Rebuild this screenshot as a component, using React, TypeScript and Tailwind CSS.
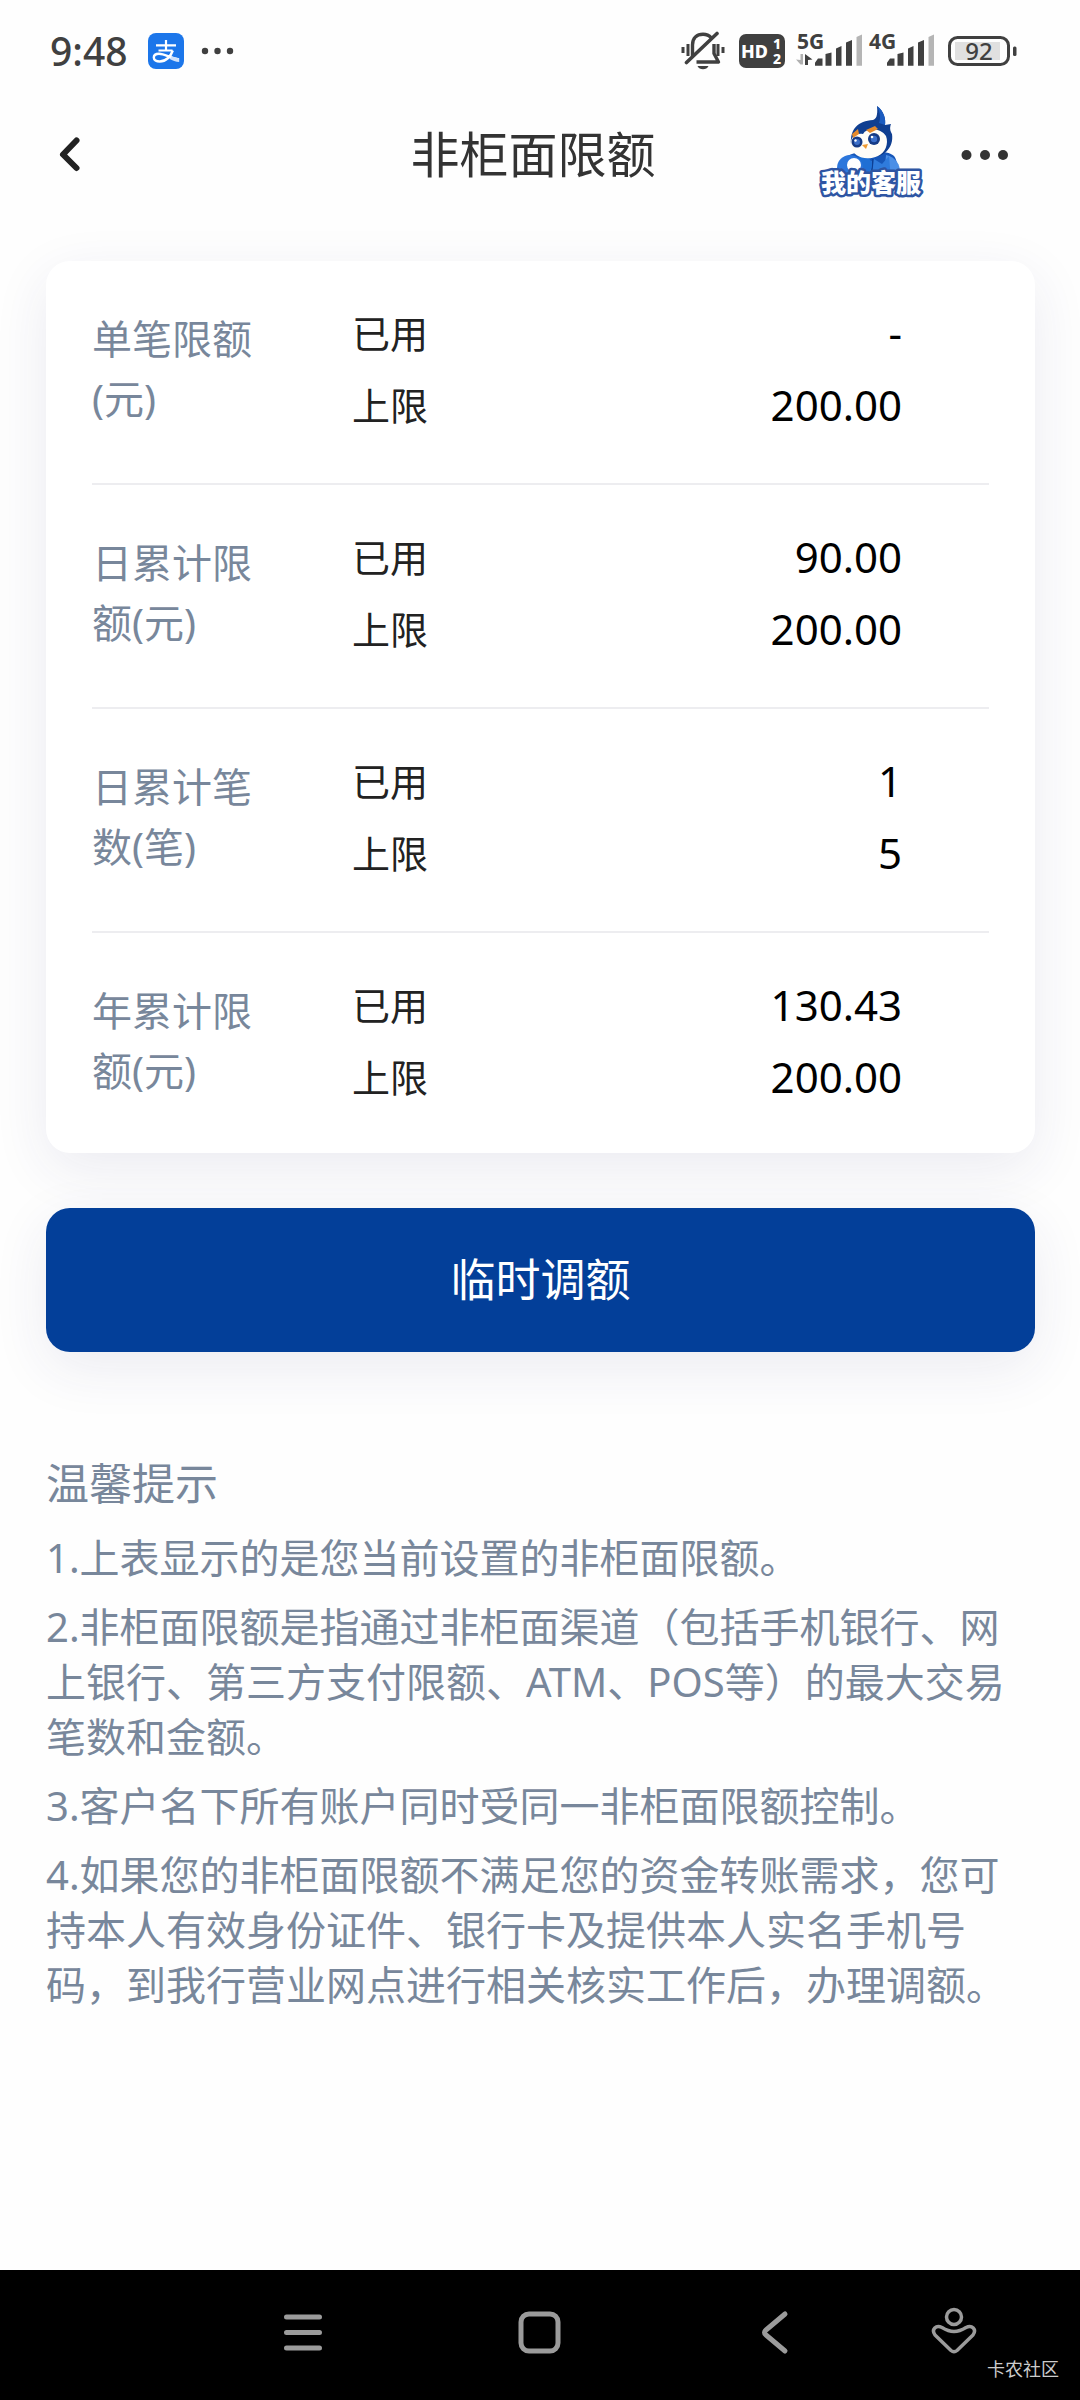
import React from "react";

interface LimitRow {
  label: string;
  used: string;
  max: string;
}

const LIMITS: LimitRow[] = [
  { label: "单笔限额(元)", used: "-", max: "200.00" },
  { label: "日累计限额(元)", used: "90.00", max: "200.00" },
  { label: "日累计笔数(笔)", used: "1", max: "5" },
  { label: "年累计限额(元)", used: "130.43", max: "200.00" },
];

const TIPS = [
  "1.上表显示的是您当前设置的非柜面限额。",
  "2.非柜面限额是指通过非柜面渠道（包括手机银行、网上银行、第三方支付限额、ATM、POS等）的最大交易笔数和金额。",
  "3.客户名下所有账户同时受同一非柜面限额控制。",
  "4.如果您的非柜面限额不满足您的资金转账需求，您可持本人有效身份证件、银行卡及提供本人实名手机号码，到我行营业网点进行相关核实工作后，办理调额。",
];

function AlipayIcon() {
  return (
    <svg className="size-9" viewBox="0 0 36 36" fill="none">
      <rect width="36" height="36" rx="8" fill="#1c76ea" />
      <path d="M8 12.3h20M18 7v10.500M10.500 17.500h14" stroke="#fff" strokeWidth="2.200" />
      <path
        d="M24.800 17.500c-2 6-7 11-13 11-3.500 0-6-1.500-6-4 0-2.300 2.200-3.800 5.200-3.800 6 0 11 4.500 20 5.800"
        stroke="#fff"
        strokeWidth="2.400"
      />
      <path d="M24 23.500l7.200 2v3.500c-3.500-.2-6.500-1.500-10-3.300z" fill="#cfe1fb" />
    </svg>
  );
}

function MutedBell() {
  return (
    <svg className="h-10 w-11" viewBox="0 0 44 40" fill="none" stroke="#404040" strokeWidth="3.400">
      <path d="M2 16v6M7 13v12M37 13v12M42 16v6" strokeWidth="3" />
      <path d="M11.500 25V14C11.500 7 16 3.200 22 3.200c3.500 0 6.200 1.200 8 3.400" />
      <path d="M33 13v9.500l4.500 8.500H15.500" strokeLinejoin="round" />
      <path d="M5.500 31.500L36 2.500" strokeWidth="3.600" strokeLinecap="round" />
      <path d="M16.500 35h11c-1 2.200-3 3.300-5.500 3.300s-4.500-1.100-5.500-3.300z" fill="#404040" stroke="none" />
    </svg>
  );
}

function SignalBars({ label, arrows }: { label: string; arrows?: boolean }) {
  return (
    <svg className="h-13 w-17" viewBox="0 -6 68 52">
      <text x="1" y="18" fontSize="21" fontWeight="700" fill="#404040">
        {label}
      </text>
      {arrows && (
        <>
          <path d="M4.500 23v10.500H7V23zM0 28.500l4.500 5V29z" fill="#b0b0b0" />
          <path d="M9 23v11h3V29l4.500-.5z" fill="#404040" />
        </>
      )}
      <path d="M19 34.700v-3l3-4.200h4.500v7.200zM29.500 34.700V23l6-1.500v13.200zM40 34.700V17.500l5.500-2.500v19.700zM50 34.700V11.500l6-2.500v25.700z" fill="#404040" />
      <path d="M60.500 34.700V6l5.500-2.500v31.200z" fill="#b5b5b5" />
    </svg>
  );
}

function StatusBar() {
  return (
    <div className="flex h-[102px] items-center justify-between pr-[62px] pl-[50px] text-[#404040]">
      <div className="flex items-center">
        <span className="text-[39px] font-medium">9:48</span>
        <span className="ml-5">
          <AlipayIcon />
        </span>
        <svg className="ml-4 h-2 w-9" viewBox="0 0 36 8" fill="#404040">
          <circle cx="5" cy="4" r="3.200" />
          <circle cx="17.500" cy="4" r="3.200" />
          <circle cx="30" cy="4" r="3.200" />
        </svg>
      </div>
      <div className="flex items-center">
        <MutedBell />
        <svg className="ml-3.5 h-[42px] w-[47px]" viewBox="0 -4 47 42">
          <rect width="46" height="34" rx="7" fill="#404040" />
          <g fill="#fff" fontWeight="800">
            <text x="2" y="24" fontSize="18">HD</text>
            <text x="34" y="15" fontSize="14">1</text>
            <text x="34" y="30" fontSize="14">2</text>
          </g>
        </svg>
        <div className="ml-2.5">
          <SignalBars label="5G" arrows />
        </div>
        <div className="ml-1">
          <SignalBars label="4G" />
        </div>
        <svg className="ml-3 h-[42px] w-[70px]" viewBox="0 -6 70 42">
          <rect x="7" y="6" width="45" height="18" fill="#e0e0e0" />
          <rect x="1.500" y="1.500" width="59" height="27" rx="8" fill="none" stroke="#404040" strokeWidth="3" />
          <rect x="65" y="10.500" width="3.500" height="9.500" rx="1.500" fill="#404040" />
          <text x="31" y="24" fontSize="24" fontWeight="500" textAnchor="middle" fill="#404040">
            92
          </text>
        </svg>
      </div>
    </div>
  );
}

// Penguin mascot with its caption
function ServiceMascot() {
  return (
    <svg className="h-[100px] w-[112px]" viewBox="0 5 112 100">
      <path d="M30 58c8-7 42-8 48-1 6 8 3 24-5 30H40c-8-6-12-20-10-29z" fill="#1656b8" />
      <path d="M70 56c10 2 17 12 12 21-4 6-10 6-14 2z" fill="#4c8fe6" />
      <path d="M44 58l8 7 6-5 8 5 7-8 2 24H42z" fill="#2f7bdc" />
      <path d="M57 60l-2 20" stroke="#0d3f94" strokeWidth="1.500" />
      <circle cx="47" cy="66" r="9" fill="#1f6fd4" />
      <circle cx="34" cy="69" r="13" fill="#2c76dc" />
      <circle cx="38" cy="66" r="7" fill="#fff" />
      <path d="M22 73c2 9 14 12 21 7" stroke="#5f80ad" strokeWidth="3" fill="none" />
      <path d="M35 45C34 30 42 22 57 21c3-1 5-4 4-14 7 5 9 13 8 19l6-1c-2 5 0 8 1 10 1 7-1 13-6 18C61 62 39 60 35 45z" fill="#103f91" />
      <path d="M61 7c7 5 9 13 8 19l-6-2c2-5 1-11-2-17z" fill="#1b5cc0" />
      <path d="M35 47c-1-9 4-13 12-12 4-7 18-6 23 2 3 8-1 17-8 20-11 5-25 2-27-10z" fill="#fffdf8" />
      <path d="M36 35l6-5 1 5-6 4zM50 31l9-4 3 3-8 4z" fill="#e58a2c" />
      <circle cx="41" cy="43" r="5.500" fill="#173b85" />
      <circle cx="58" cy="40" r="6" fill="#173b85" />
      <circle cx="41" cy="43" r="3" fill="#3c6fc9" />
      <circle cx="58" cy="40" r="3.200" fill="#3c6fc9" />
      <circle cx="39.500" cy="41.500" r="1.200" fill="#fff" />
      <circle cx="56" cy="38" r="1.300" fill="#fff" />
      <path d="M46 46l6-1-2 5z" fill="#ef9a33" />
      <text
        x="55"
        y="93"
        textAnchor="middle"
        fontSize="25"
        fontWeight="900"
        fill="#fff"
        stroke="#2e55a3"
        strokeWidth="5"
        strokeLinejoin="round"
        paintOrder="stroke"
      >
        我的客服
      </text>
    </svg>
  );
}

function Header() {
  return (
    <header className="grid h-[104px] grid-cols-[1fr_auto_1fr] items-center pr-[68px] pl-[54px]">
      <button aria-label="返回" className="w-8 cursor-pointer">
        <svg className="h-10 w-8" viewBox="0 0 32 40" fill="none">
          <path d="M22.500 6.500L9 20.500l13.500 13.500" stroke="#222" strokeWidth="6" strokeLinecap="round" strokeLinejoin="round" />
        </svg>
      </button>
      <h1 className="text-[49px] leading-none text-[#333]">非柜面限额</h1>
      <div className="flex items-center justify-end gap-7">
        <button aria-label="我的客服" className="cursor-pointer">
          <ServiceMascot />
        </button>
        <button aria-label="更多" className="cursor-pointer">
          <svg className="h-4 w-14" viewBox="0 0 56 16" fill="#333">
            <circle cx="10.500" cy="9" r="5" />
            <circle cx="29" cy="9" r="5" />
            <circle cx="47" cy="9" r="5" />
          </svg>
        </button>
      </div>
    </header>
  );
}

function LimitTable() {
  return (
    <section className="rounded-3xl bg-white px-[46px] shadow-[0_16px_56px_rgba(40,40,110,0.09)]">
      <dl>
        {LIMITS.map((row) => (
          <div
            key={row.label}
            className="flex h-56 items-start border-b-2 border-[#ededf0] pr-[87px] last:h-[220px] last:border-b-0"
          >
            <dt className="mt-12 w-[162px] shrink-0 text-[40px] leading-[60px] text-[#78879b]">{row.label}</dt>
            <dd className="mt-9 ml-[98px] flex-1 text-[38px] leading-[72px] text-[#222]">
              <div className="flex justify-between">
                <span>已用</span>
                <span className="text-[42px] text-black">{row.used}</span>
              </div>
              <div className="flex justify-between">
                <span>上限</span>
                <span className="text-[42px] text-black">{row.max}</span>
              </div>
            </dd>
          </div>
        ))}
      </dl>
    </section>
  );
}

function NavBar() {
  return (
    <nav className="relative flex h-[130px] items-center justify-between bg-black pr-[98px] pl-[276px] text-[#9b9b9b]">
      <div className="flex items-center gap-[180px]">
        <button aria-label="菜单">
          <svg className="size-14" viewBox="0 0 56 56" stroke="currentColor" strokeWidth="5" strokeLinecap="round">
            <path d="M10.500 10h33M10.500 25.500h33M10.500 41h33" />
          </svg>
        </button>
        <button aria-label="主页">
          <svg className="size-14" viewBox="0 0 56 56" fill="none" stroke="currentColor" strokeWidth="5">
            <rect x="9" y="7" width="37" height="37" rx="8" />
          </svg>
        </button>
        <button aria-label="返回上一页">
          <svg className="size-14" viewBox="0 0 56 56" fill="none" stroke="currentColor" strokeWidth="5" strokeLinecap="round">
            <path d="M37 7L18 23q-3 2.500 0 5L37 44" />
          </svg>
        </button>
      </div>
      <button aria-label="无障碍">
        <svg className="size-14" viewBox="0 0 56 56" fill="none" stroke="currentColor" strokeWidth="3.500" strokeLinejoin="round">
          <circle cx="28" cy="10" r="7.500" />
          <path d="M28 24.500c4 0 8-1.500 12-4 6-3 11 2 7 7.500L31 43.500q-3 2.500-6 0L9 28C5 22.500 10 17.500 16 20.500c4 2.500 8 4 12 4z" />
        </svg>
      </button>
      <span className="absolute right-[21px] bottom-[21px] text-lg leading-5 text-[#ccc]">卡农社区</span>
    </nav>
  );
}

export default function App() {
  return (
    <div
      lang="zh-CN"
      className="flex min-h-screen flex-col bg-[#fefefe] font-['Noto_Sans','Noto_Sans_CJK_SC',sans-serif]"
    >
      <StatusBar />
      <Header />
      <main className="flex-1 pt-[55px] pr-[45px] pl-[46px]">
        <LimitTable />
        <button className="mt-[55px] h-36 w-full cursor-pointer rounded-3xl bg-[#033f99] text-[45px] text-white shadow-[0_16px_56px_rgba(40,40,110,0.09)]">
          临时调额
        </button>
        <section className="mt-[102px] text-[#78879b]">
          <h2 className="text-[43px] leading-[60px]">温馨提示</h2>
          <ol className="mt-4 space-y-3.5 text-[40px] leading-[55px]">
            {TIPS.map((tip) => (
              <li key={tip}>{tip}</li>
            ))}
          </ol>
        </section>
      </main>
      <NavBar />
    </div>
  );
}
